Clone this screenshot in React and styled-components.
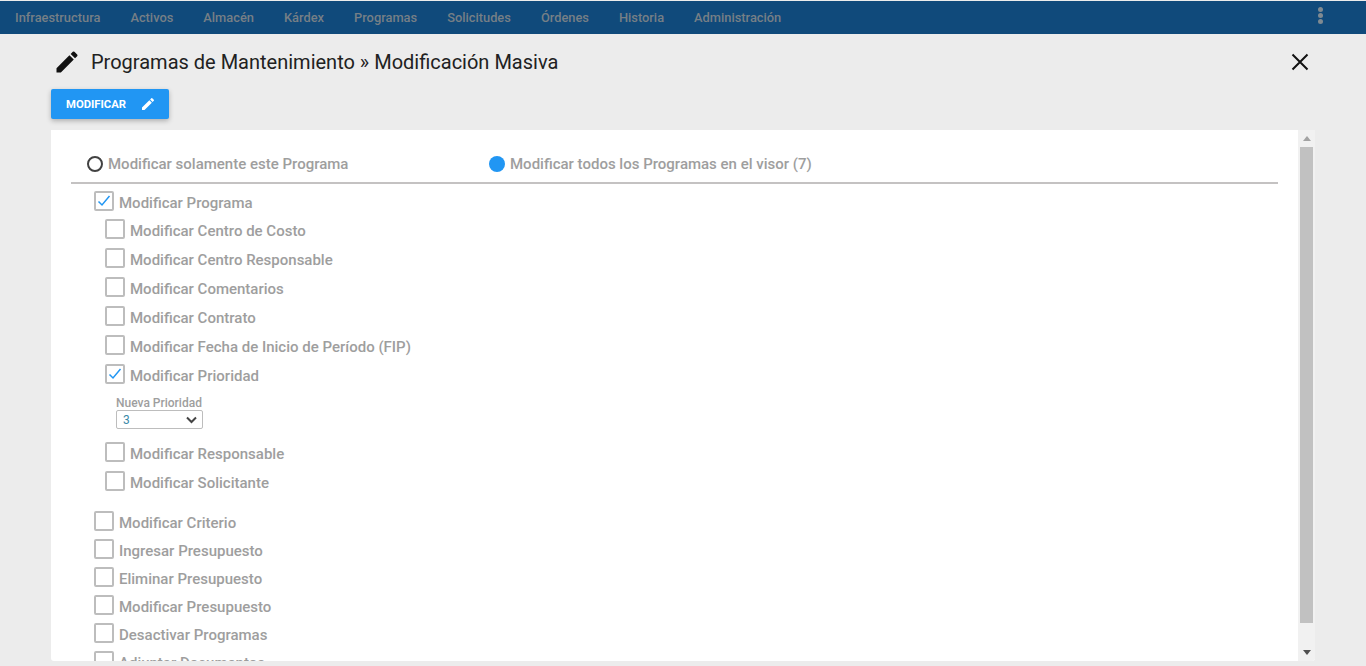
import styled, { createGlobalStyle } from 'styled-components';

const GlobalStyle = createGlobalStyle`
  html, body {
    margin: 0;
    height: 100%;
    overflow: hidden;
    background: #ececec;
    font-family: Roboto, "Liberation Sans", sans-serif;
  }
`;

const Page = styled.div`
  height: 666px;
  display: flex;
  flex-direction: column;
  overflow: hidden;
`;

const NavBar = styled.nav`
  height: 33px;
  margin-top: 1px;
  flex: none;
  background: #104a7b;
  display: flex;
  align-items: center;
  padding: 0 43px 0 15px;
  gap: 30px;
`;

const NavItem = styled.a`
  font-size: 12.85px;
  font-weight: 500;
  color: #767f86;
  white-space: nowrap;
`;

const NavMenu = styled.div`
  margin-left: auto;
  display: flex;
  flex-direction: column;
  gap: 1px;
  margin-top: -5px;

  span {
    width: 5px;
    height: 5px;
    border-radius: 50%;
    background: #7f8a92;
  }
`;

const Content = styled.main`
  flex: 1;
  min-height: 0;
  display: flex;
  flex-direction: column;
  padding: 0 51px 5px;
`;

const TitleRow = styled.header`
  height: 55px;
  flex: none;
  display: flex;
  align-items: center;
  padding: 0 5px 0 2px;
`;

const Title = styled.h1`
  margin: 0 0 0 10px;
  font-size: 20px;
  font-weight: 400;
  color: #212121;
`;

const CloseButton = styled.button`
  margin-left: auto;
  padding: 0;
  border: 0;
  background: none;
  display: flex;
`;

const ActionButton = styled.button`
  align-self: flex-start;
  width: 118px;
  height: 30px;
  flex: none;
  border: 0;
  border-radius: 2px;
  background: #2196f3;
  color: #fff;
  font: 700 11.3px Roboto, sans-serif;
  display: flex;
  align-items: center;
  gap: 14px;
  padding: 0 0 0 15px;
  box-shadow: 0 2px 5px rgba(0, 0, 0, 0.26);
`;

const Panel = styled.section`
  flex: 1;
  min-height: 0;
  margin-top: 11px;
  display: flex;
  background: #fff;
  border-radius: 0 0 3px 3px;
  overflow: hidden;
`;

const Form = styled.div`
  flex: 1;
  min-width: 0;
  overflow: hidden;
  padding: 0 20px;
`;

const RadioRow = styled.div`
  height: 54px;
  display: flex;
  align-items: center;
  padding: 16px 0 0 16px;
  border-bottom: 2px solid #c4c2c2;
  box-sizing: border-box;
`;

const RadioOption = styled.label`
  width: 402px;
  display: flex;
  align-items: center;
  gap: 5px;
  font-size: 15px;
  font-weight: 500;
  color: #9e9e9e;
`;

const RadioDot = styled.span`
  width: 16px;
  height: 16px;
  flex: none;
  border-radius: 50%;
  box-sizing: border-box;
  border: ${({ $on }) => ($on ? '0' : '2px solid #424242')};
  background: ${({ $on }) => ($on ? '#2196f3' : 'transparent')};
`;

const Group = styled.div`
  padding-left: ${({ $sub }) => ($sub ? '34px' : '23px')};
  padding-top: ${({ $top }) => $top || 0}px;
  margin-top: ${({ $pull }) => $pull || 0}px;
  margin-bottom: ${({ $gap }) => $gap || 0}px;
`;

const CheckRow = styled.label`
  height: ${({ $sub }) => ($sub ? '29px' : '28px')};
  display: flex;
  align-items: center;
  gap: 5px;
  font-size: 15px;
  font-weight: 500;
  color: #9e9e9e;
  white-space: nowrap;
`;

const Box = styled.span`
  width: 20px;
  height: 20px;
  flex: none;
  margin-top: -4px;
  box-sizing: border-box;
  border: 2px solid #bdbdbd;
  border-radius: 2px;
  background: #fff;
  display: flex;
  align-items: center;
  justify-content: center;
`;

const SelectField = styled.div`
  padding: 7px 0 0 11px;
  height: 49px;
  box-sizing: border-box;
`;

const SelectLabel = styled.div`
  font-size: 12px;
  line-height: 13px;
  font-weight: 500;
  color: #9e9e9e;
`;

const FakeSelect = styled.div`
  width: 87px;
  height: 19px;
  box-sizing: border-box;
  border: 1px solid #bdbdbd;
  border-radius: 2px;
  display: flex;
  align-items: center;
  justify-content: space-between;
  padding: 0 5px 0 6px;
  font-size: 12px;
  color: #3a8aa8;
`;

const Scrollbar = styled.div`
  width: 17px;
  flex: none;
  display: flex;
  flex-direction: column;
  align-items: center;
  background: #f1f1f1;
`;

const ScrollArrow = styled.div`
  height: 17px;
  flex: none;
  display: flex;
  align-items: center;
  justify-content: center;
`;

const ScrollThumb = styled.div`
  width: 13px;
  height: 476px;
  flex: none;
  background: #c1c1c1;
`;

const ScrollSpacer = styled.div`
  flex: 1;
`;

const PencilIcon = ({ size, color }) => (
  <svg width={size} height={size} viewBox="0 0 24 24" fill={color}>
    <path d="M3 17.25V21h3.75L17.81 9.94l-3.75-3.75L3 17.25zM20.71 7.04a1 1 0 0 0 0-1.41l-2.34-2.34a1 1 0 0 0-1.41 0l-1.83 1.83 3.75 3.75 1.83-1.83z" />
  </svg>
);

const Check = () => (
  <svg width="14" height="14" viewBox="0 0 14 14" fill="none" stroke="#2196f3" strokeWidth="1.5">
    <path d="M1.5 7.5 5 11l7.5-9" />
  </svg>
);

const CheckItem = ({ label, checked, sub }) => (
  <CheckRow $sub={sub}>
    <Box>{checked && <Check />}</Box>
    {label}
  </CheckRow>
);

const navItems = ['Infraestructura', 'Activos', 'Almacén', 'Kárdex', 'Programas', 'Solicitudes', 'Órdenes', 'Historia', 'Administración'];
const subBefore = ['Modificar Centro de Costo', 'Modificar Centro Responsable', 'Modificar Comentarios', 'Modificar Contrato', 'Modificar Fecha de Inicio de Período (FIP)'];
const subAfter = ['Modificar Responsable', 'Modificar Solicitante'];
const others = ['Modificar Criterio', 'Ingresar Presupuesto', 'Eliminar Presupuesto', 'Modificar Presupuesto', 'Desactivar Programas', 'Adjuntar Documentos'];

export default function App() {
  return (
    <Page>
      <GlobalStyle />
      <NavBar>
        {navItems.map((item) => (
          <NavItem key={item}>{item}</NavItem>
        ))}
        <NavMenu>
          <span />
          <span />
          <span />
        </NavMenu>
      </NavBar>
      <Content>
        <TitleRow>
          <PencilIcon size={28} color="#111" />
          <Title>Programas de Mantenimiento » Modificación Masiva</Title>
          <CloseButton>
            <svg width="20" height="20" viewBox="0 0 20 20" stroke="#111" strokeWidth="2">
              <path d="M2.5 2.5 17.5 17.5M17.5 2.5 2.5 17.5" />
            </svg>
          </CloseButton>
        </TitleRow>
        <ActionButton>
          MODIFICAR
          <PencilIcon size={16} color="#fff" />
        </ActionButton>
        <Panel>
          <Form>
            <RadioRow>
              <RadioOption>
                <RadioDot />
                Modificar solamente este Programa
              </RadioOption>
              <RadioOption>
                <RadioDot $on />
                Modificar todos los Programas en el visor (7)
              </RadioOption>
            </RadioRow>
            <Group $top={5}>
              <CheckItem label="Modificar Programa" checked />
            </Group>
            <Group $sub $pull={-1} $gap={12}>
              {subBefore.map((label) => (
                <CheckItem key={label} label={label} sub />
              ))}
              <CheckItem label="Modificar Prioridad" checked sub />
              <SelectField>
                <SelectLabel>Nueva Prioridad</SelectLabel>
                <FakeSelect>
                  3
                  <svg width="11" height="8" viewBox="0 0 11 8" fill="none" stroke="#444" strokeWidth="2">
                    <path d="M1 1.5 5.5 6 10 1.5" />
                  </svg>
                </FakeSelect>
              </SelectField>
              {subAfter.map((label) => (
                <CheckItem key={label} label={label} sub />
              ))}
            </Group>
            <Group>
              {others.map((label) => (
                <CheckItem key={label} label={label} />
              ))}
            </Group>
          </Form>
          <Scrollbar>
            <ScrollArrow>
              <svg width="8" height="5" viewBox="0 0 8 5" fill="#a3a3a3"><path d="M4 0 8 5H0z" /></svg>
            </ScrollArrow>
            <ScrollThumb />
            <ScrollSpacer />
            <ScrollArrow>
              <svg width="8" height="5" viewBox="0 0 8 5" fill="#505050"><path d="M0 0h8L4 5z" /></svg>
            </ScrollArrow>
          </Scrollbar>
        </Panel>
      </Content>
    </Page>
  );
}
